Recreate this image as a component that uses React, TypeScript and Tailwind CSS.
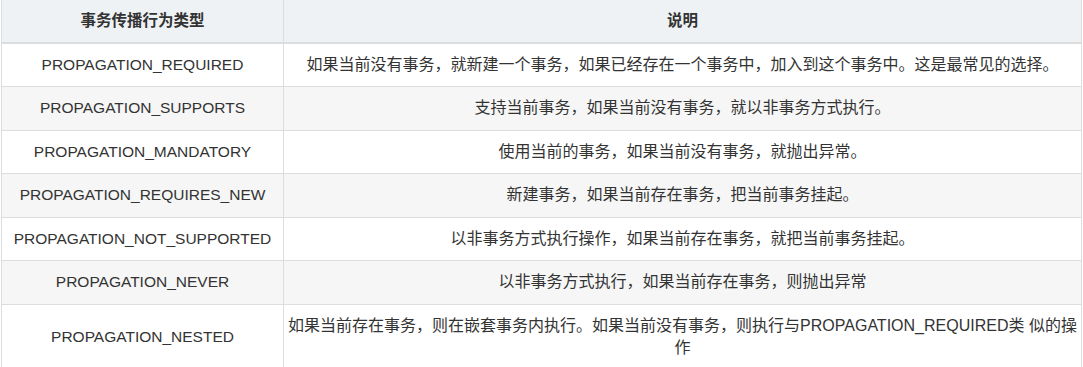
const rows: [string, React.ReactNode][] = [
  [
    "PROPAGATION_REQUIRED",
    "如果当前没有事务，就新建一个事务，如果已经存在一个事务中，加入到这个事务中。这是最常见的选择。",
  ],
  ["PROPAGATION_SUPPORTS", "支持当前事务，如果当前没有事务，就以非事务方式执行。"],
  ["PROPAGATION_MANDATORY", "使用当前的事务，如果当前没有事务，就抛出异常。"],
  ["PROPAGATION_REQUIRES_NEW", "新建事务，如果当前存在事务，把当前事务挂起。"],
  ["PROPAGATION_NOT_SUPPORTED", "以非事务方式执行操作，如果当前存在事务，就把当前事务挂起。"],
  ["PROPAGATION_NEVER", "以非事务方式执行，如果当前存在事务，则抛出异常"],
  [
    "PROPAGATION_NESTED",
    <>
      <span className="whitespace-nowrap">
        如果当前存在事务，则在嵌套事务内执行。如果当前没有事务，则执行与PROPAGATION_REQUIRED类 似的操
      </span>
      <br />
      作
    </>,
  ],
];

export default function App() {
  return (
    <div className="h-[367px] w-[1083px] overflow-hidden bg-white font-['Liberation_Sans','Noto_Sans_CJK_SC',sans-serif] text-[15.5px] leading-[22.5px] text-[#333]">
      <table className="ml-px w-[1081px] table-fixed border-collapse">
        <thead className="bg-[#eff2f5]">
          <tr className="border-b-2 border-[#dddddd]">
            <th className="w-[282px] border-x border-[#dddddd] px-2 py-[9.5px] text-center font-bold">
              事务传播行为类型
            </th>
            <th className="border-x border-[#dddddd] px-2 py-[9.5px] text-center font-bold">
              说明
            </th>
          </tr>
        </thead>
        <tbody>
          {rows.map(([name, desc], i) => (
            <tr
              className={`border-b border-[#dddddd] ${i % 2 === 1 ? "bg-[#f6f6f6]" : "bg-white"}`}
              key={name}
            >
              <td className="border-x border-[#dddddd] px-2 py-[10px] text-center">{name}</td>
              <td className="border-x border-[#dddddd] px-1 py-[10px] text-center text-[16px]">
                {desc}
              </td>
            </tr>
          ))}
        </tbody>
      </table>
    </div>
  );
}
